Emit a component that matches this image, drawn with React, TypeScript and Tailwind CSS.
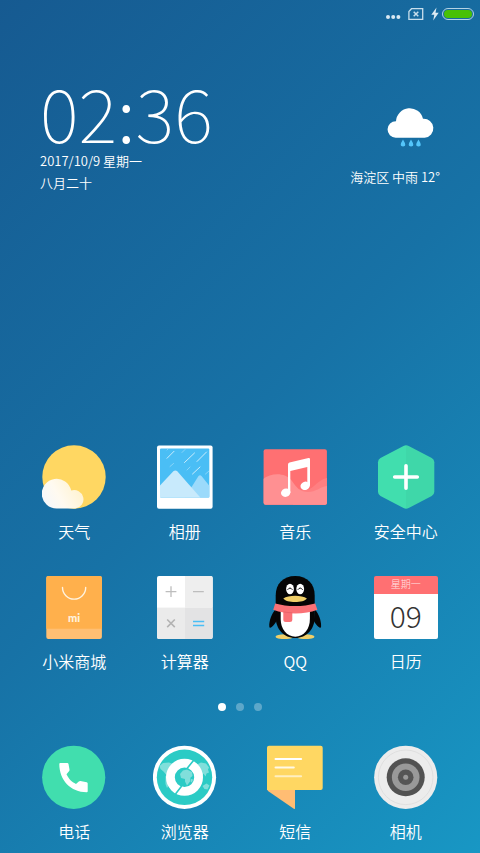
import type { ReactNode } from "react";
import clsx from "clsx";

interface AppEntry {
  name: string;
  icon: ReactNode;
}

function WeatherIcon() {
  return (
    <svg viewBox="0 0 64 64" className="h-16 w-16">
      <defs>
        <linearGradient id="cloud" x1="0" y1="1" x2="1" y2="0.6">
          <stop offset="0" stopColor="#f3f7ff" />
          <stop offset="0.5" stopColor="#fffaf0" />
          <stop offset="1" stopColor="#fff3d2" />
        </linearGradient>
      </defs>
      <circle cx="32" cy="32" r="31.7" fill="#ffd762" />
      <path
        d="M15 63.6a14.9 14.9 0 1 1 14.2-18 9.3 9.3 0 1 1 4.400 18z"
        fill="url(#cloud)"
      />
    </svg>
  );
}

function GalleryIcon() {
  return (
    <svg viewBox="0 0 64 64" className="h-16 w-16">
      <rect x="4" y="0.4" width="55.6" height="63.4" rx="2" fill="#fff" />
      <rect x="7" y="3.4" width="49.3" height="49" rx="1" fill="#4abef5" />
      <g stroke="#c9ecfd" strokeWidth="1" strokeLinecap="round">
        <path d="M14 13.3 21 6.3M31.5 17.5 41.5 8M44 16.5 53.5 7M39.5 29 47 22" />
        <path
          d="M29 7.5 32 4.5M17 21.5 20.5 18.5M34 25 37 22M52.5 29 56 26M14 5l1-1"
          opacity="0.5"
        />
      </g>
      <path
        d="M32 52.4 45.5 31q1.5-1.7 3 0l7.8 9.7v11.7z"
        fill="#9bdafb"
      />
      <path
        d="M7 40.5 20.3 26.3q2-1.800 4 0L47.3 52.4H7z"
        fill="#c8eafc"
      />
    </svg>
  );
}

function MusicIcon() {
  return (
    <svg viewBox="0 0 64 64" className="h-16 w-16">
      <defs>
        <clipPath id="music-card">
          <rect x="0.6" y="4.3" width="63.3" height="55.5" rx="2" />
        </clipPath>
      </defs>
      <g clipPath="url(#music-card)">
        <rect y="4" width="64" height="56" fill="#ff7072" />
        <path
          d="M30 40c5 6 15 7 21 1 4-4 8-7 13-8v27H30z"
          fill="#ff7f81"
        />
        <path
          d="M0 34c8-6 22-7 29 2 5 7 8 11 16 11 8 0 12-5 19-6v19H0z"
          fill="#ff9092"
        />
      </g>
      <path
        d="M25 19.5q0-1.5 1.5-1.9l19-4.5q1.5-.3 1.5 1.2v26.2h-2.7V22l-17 4v22H25z"
        fill="#fff"
      />
      <ellipse cx="22.7" cy="47.7" rx="4.8" ry="4.1" transform="rotate(-20 22.7 47.7)" fill="#fff" />
      <ellipse cx="42.2" cy="40.8" rx="4.8" ry="4.1" transform="rotate(-20 42.2 40.8)" fill="#fff" />
    </svg>
  );
}

function SecurityIcon() {
  return (
    <svg viewBox="0 0 64 64" className="h-16 w-16">
      <defs>
        <linearGradient id="shield">
          <stop offset="0.5" stopColor="#41deae" />
          <stop offset="0.5" stopColor="#3fd7a9" />
        </linearGradient>
      </defs>
      <path
        d="M29.5 1q2.6-1.3 5.2 0l23 12q2.6 1.5 2.6 4.3v29.4q0 2.8-2.6 4.3l-23 12q-2.6 1.3-5.2 0l-23-12Q4 49.5 4 46.7V17.3Q4 14.5 6.5 13z"
        fill="url(#shield)"
      />
      <path
        d="M32 20.7v22.6M20.7 32h22.6"
        stroke="#fff"
        strokeWidth="3.6"
        strokeLinecap="round"
      />
    </svg>
  );
}

function StoreIcon() {
  return (
    <svg viewBox="0 0 64 64" className="h-16 w-16">
      <rect x="4.3" y="1" width="55.6" height="63" rx="2" fill="#ffbf73" />
      <path d="M4.3 53.7V3q0-2 2-2h51.6q2 0 2 2v50.7z" fill="#ffb04c" />
      <path
        d="M20.5 12.5a11.6 11.6 0 0 0 23.2 0"
        fill="none"
        stroke="#fff3df"
        strokeWidth="1.4"
        strokeLinecap="round"
      />
      <text
        x="32"
        y="47"
        textAnchor="middle"
        className="fill-[#fff3df] font-['Lato'] text-[11px] font-black"
      >
        mi
      </text>
    </svg>
  );
}

function CalculatorIcon() {
  return (
    <svg viewBox="0 0 64 64" className="h-16 w-16">
      <defs>
        <clipPath id="calc-card">
          <rect x="4" y="1" width="55.7" height="63" rx="2" />
        </clipPath>
      </defs>
      <g clipPath="url(#calc-card)">
        <rect width="64" height="64" fill="#fff" />
        <rect x="32" width="32" height="32.6" fill="#eee" />
        <rect y="32.6" width="32" height="32" fill="#ebebeb" />
        <rect x="32" y="32.6" width="32" height="32" fill="#e3e3e4" />
      </g>
      <path
        d="M18 11.3v10.8M12.6 16.7h10.8M40 16.7h10.8"
        stroke="#bdbdbd"
        strokeWidth="1.3"
      />
      <path
        d="m14.2 44.5 7.6 7.6m0-7.6-7.6 7.6"
        stroke="#b3b3b3"
        strokeWidth="1.6"
      />
      <path d="M40 46.5h11.2M40 50.5h11.2" stroke="#4abef5" strokeWidth="1.4" />
    </svg>
  );
}

function QQIcon() {
  return (
    <svg viewBox="0 0 64 64" className="h-16 w-16">
      <ellipse cx="21.5" cy="61.7" rx="9" ry="2.4" fill="#f0cf68" />
      <ellipse cx="42.5" cy="61.7" rx="9" ry="2.4" fill="#f0cf68" />
      <path
        d="M12.7 34C8.5 39 6 46 6.3 51.5c.2 1.8 1.3 1.6 2.4.6 2-1.8 3.5-3.5 4.8-6.1zM51.7 34c4.2 5 6.7 12 6.4 17.5-.2 1.8-1.3 1.6-2.4.6-2-1.8-3.5-3.5-4.8-6.1z"
        fill="#050505"
      />
      <path
        d="M32.2 1C20 1 12.7 9 12.7 20.5V42c0 12 8 21 19.5 21s19.5-9 19.5-21V20.5C51.7 9 44.4 1 32.2 1z"
        fill="#050505"
      />
      <path
        d="M17.7 36h29.2v8c0 10-6 17.7-14.6 17.7S17.7 54 17.7 44z"
        fill="#fff"
      />
      <path
        d="M12.2 28.5c12 3.4 28 3.4 40 0l2.2 6.3c-13 5-31 5-44.2 0z"
        fill="#fa7176"
      />
      <path d="M20.3 35h9v9.5q0 2.5-2.5 2.5h-4q-2.5 0-2.5-2.5z" fill="#fa7176" />
      <path d="M20.5 36.9q4.5.8 8.8.9" stroke="#df5961" strokeWidth="0.6" fill="none" />
      <ellipse cx="27" cy="14" rx="3.9" ry="5.2" fill="#fff" />
      <ellipse cx="37.2" cy="14" rx="3.9" ry="5.2" fill="#fff" />
      <path
        d="M24.8 14.5q2.2-3.2 4.4 0M35 14.5q2.2-3.2 4.4 0"
        fill="none"
        stroke="#111"
        strokeWidth="1"
        strokeLinecap="round"
      />
      <path
        d="M20.3 23.5c5-3.6 18.6-3.6 23.6 0-3 4.8-20.6 4.8-23.6 0z"
        fill="#f0cf68"
      />
    </svg>
  );
}

function CalendarIcon() {
  return (
    <div className="flex h-16 w-16 flex-col pt-px">
      <div className="h-[18px] rounded-t-xs bg-[#ff7072] text-center text-[10px] leading-4 font-light text-[#ffe3e3]">
        星期一
      </div>
      <div className="flex-1 rounded-b-xs bg-white text-center text-[30px] leading-[42px] font-light text-[#333]">
        09
      </div>
    </div>
  );
}

function PhoneIcon() {
  return (
    <svg viewBox="0 0 64 64" className="h-16 w-16">
      <circle cx="31.7" cy="32.3" r="31.6" fill="#41deae" />
      <path
        d="M17.3 19q0-1 1-1h7q1 0 1.2 1l1 5.5q.2 1-.5 1.7l-2.5 3c2.5 5 5 7.500 9.500 9.700l2.800-2.400q.7-.6 1.600-.5l6.300 1.200q1 .2 1 1.200v7.800q0 1-1 1c-16 0-27.400-12-27.400-28.200z"
        fill="#fff"
      />
    </svg>
  );
}

function BrowserIcon() {
  return (
    <svg viewBox="0 0 64 64" className="h-16 w-16">
      <circle cx="31.5" cy="32.3" r="31.6" fill="#fff" />
      <circle cx="31.5" cy="32.3" r="27.7" fill="#2bcbc5" />
      <g fill="#80dfdb">
        <path d="M6.5 21l3.5-3 6-.5 4 1.5-1 3-3 2-1.5 3.5-1.5 2-2.5-3-3-2.5zM12.5 31l3 1 2 3-1.5 5-2 3-1.5-4z" />
        <path d="M43 20l5-2.5 5 1 3 4-1 2 1 3-2.5 1-1 3-2-3-2 3.5-2-4-3-1zM49.5 41l4-2.5 3 2-2 4-3-.5z" />
      </g>
      <circle cx="31.5" cy="32.3" r="14.1" fill="none" stroke="#fff" strokeWidth="8.8" />
      <path
        d="M27 29l3-3.5 4-1 5 2.5.5 4-2 1.5-.5 4-3 4-2-4v-2.5l-4-1zM38 34l2 .5-1 3-1.5-1z"
        fill="#80dfdb"
      />
      <path
        d="M40.5 15.5 34 23.5M28.7 41 22.5 49"
        stroke="#2bcbc5"
        strokeWidth="1.6"
      />
    </svg>
  );
}

function MessagesIcon() {
  return (
    <svg viewBox="0 0 64 64" className="h-16 w-16">
      <path d="M4.3 44.5H32v18.7q0 1.2-1.2.5L5 46z" fill="#ffbd73" />
      <path
        d="M6 .7h51.7q2 0 2 2V43q0 2-2 2H4V2.7q0-2 2-2z"
        fill="#ffd762"
      />
      <g stroke="#fff" strokeWidth="2" strokeLinecap="round">
        <path d="M12.5 14h25.6" />
        <path d="M12.5 22.6h18.3" opacity="0.85" />
        <path d="M12.5 31.3h25.6" opacity="0.6" />
      </g>
    </svg>
  );
}

function CameraIcon() {
  return (
    <svg viewBox="0 0 64 64" className="h-16 w-16">
      <circle cx="31.7" cy="32.3" r="31.6" fill="#ececec" />
      <circle cx="31.7" cy="32.3" r="27.3" fill="none" stroke="#dcdcdc" strokeWidth="0.8" />
      <circle cx="31.7" cy="32.3" r="19" fill="#525252" />
      <circle cx="31.7" cy="32.3" r="13.8" fill="#999" />
      <circle cx="31.7" cy="32.3" r="7.8" fill="#555" />
      <circle cx="31.7" cy="32.3" r="2.5" fill="#999" />
    </svg>
  );
}

const apps: AppEntry[] = [
  { name: "天气", icon: <WeatherIcon /> },
  { name: "相册", icon: <GalleryIcon /> },
  { name: "音乐", icon: <MusicIcon /> },
  { name: "安全中心", icon: <SecurityIcon /> },
  { name: "小米商城", icon: <StoreIcon /> },
  { name: "计算器", icon: <CalculatorIcon /> },
  { name: "QQ", icon: <QQIcon /> },
  { name: "日历", icon: <CalendarIcon /> },
];

const dock: AppEntry[] = [
  { name: "电话", icon: <PhoneIcon /> },
  { name: "浏览器", icon: <BrowserIcon /> },
  { name: "短信", icon: <MessagesIcon /> },
  { name: "相机", icon: <CameraIcon /> },
];

function AppButton({ name, icon }: AppEntry) {
  return (
    <button type="button" className="flex flex-col items-center gap-[10px]">
      {icon}
      <span className="text-base leading-6 whitespace-nowrap">{name}</span>
    </button>
  );
}

function StatusBar() {
  return (
    <header className="flex h-[27px] items-center justify-end gap-[7px] pr-[6px]">
      <svg viewBox="0 0 16 12" className="h-3 w-4" fill="#d9e8f2">
        <circle cx="3" cy="9" r="2" />
        <circle cx="8.2" cy="9" r="2" />
        <circle cx="13.4" cy="9" r="2" />
      </svg>
      <svg viewBox="0 0 16 12" className="h-3 w-4" fill="none" stroke="#c8deec" strokeWidth="1.3">
        <path d="M3.5.7h11.2v10.6H.9V3.5z" />
        <path d="m5.7 3.8 4.6 4.5m0-4.5L5.7 8.3" strokeWidth="1.5" />
      </svg>
      <div className="flex items-center gap-[3px]">
        <svg viewBox="0 0 8 14" className="h-[14px] w-2" fill="#dceaf3">
          <path d="M5.5.5.3 7.7h3L2.2 13.5 7.7 5.8H4.5z" />
        </svg>
        <div className="h-3 w-8 rounded-full border border-[#b4d3e4] p-px">
          <div className="h-full rounded-full bg-[#48c105]" />
        </div>
      </div>
    </header>
  );
}

export default function App() {
  return (
    <main className="flex min-h-screen flex-col bg-linear-135 from-[#165a91] via-[#1772a6] to-[#1897c4] font-['Noto_Sans_CJK_SC',sans-serif] font-[350] text-white">
      <StatusBar />

      {/* Clock and weather widgets */}
      <section className="flex items-start justify-between px-10 pt-11">
        <div>
          <time className="block text-[74px] leading-[79px] font-thin">
            02<span className="font-light">:</span>36
          </time>
          <p className="text-[13px] leading-[22px]">2017/10/9 星期一</p>
          <p className="text-[13px] leading-[22px]">八月二十</p>
        </div>
        <div className="flex flex-col items-end gap-[18px] pt-[35px]">
          <svg viewBox="0 0 48 42" className="mr-[5px] h-[42px] w-12">
            <path
              d="M8.7 31.8a8.3 8.3 0 0 1 .3-16.6A13.7 13.7 0 0 1 36 12.8a9.5 9.5 0 1 1 1.6 19z"
              fill="#fff"
            />
            <path
              d="M16 33.5q-4.5 6.9 0 7t0-7zM24 33.5q-4.5 6.9 0 7t0-7zM31.5 33.5q-4.5 6.9 0 7t0-7z"
              fill="#54c5fa"
            />
          </svg>
          <p className="text-[13px] leading-[22px]">海淀区 中雨 12°</p>
        </div>
      </section>

      <div className="flex-1" />

      <section className="grid grid-cols-4 gap-y-8 px-[19px]">
        {apps.map((app) => (
          <AppButton key={app.name} {...app} />
        ))}
      </section>

      {/* Page indicator */}
      <nav className="mt-[30px] flex justify-center gap-[10px]">
        {[0, 1, 2].map((page) => (
          <button
            key={page}
            type="button"
            aria-label={`第${page + 1}页`}
            className={clsx("h-2 w-2 rounded-full", page === 0 ? "bg-white" : "bg-white/30")}
          />
        ))}
      </nav>

      <section className="mt-[34px] grid grid-cols-4 px-[19px] pb-[10px]">
        {dock.map((app) => (
          <AppButton key={app.name} {...app} />
        ))}
      </section>
    </main>
  );
}
